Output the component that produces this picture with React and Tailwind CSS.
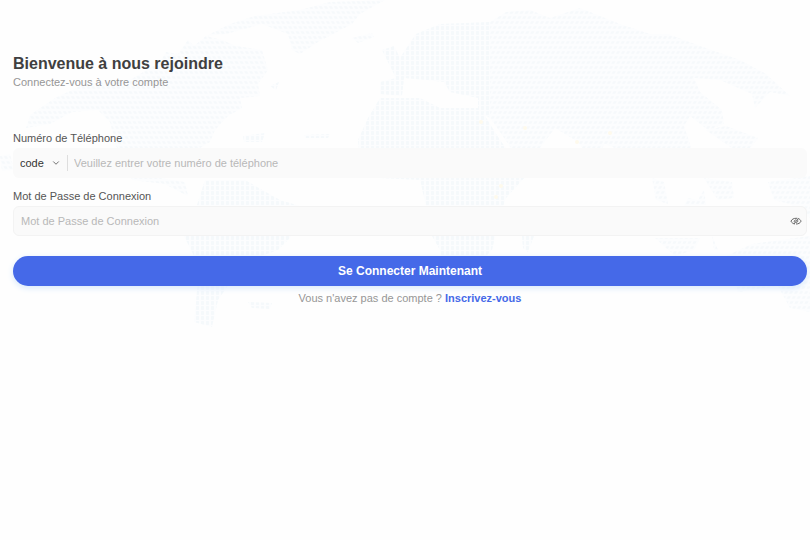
import { useState } from "react";
import { ChevronDown } from "lucide-react";

// Land masses of the globe, filled with a dotted pattern that leans with the curve
const WEST = [
  // North America
  "M26 128 L30 115 L55 98 L85 84 L130 80 L160 62 L166 52 L178 54 L188 40 L194 46 L206 36 L222 40 L236 46 L262 50 L268 70 L258 84 L260 96 L240 98 L242 108 L228 116 L215 130 L210 142 L190 154 L180 162 L165 158 L150 164 L160 178 L185 182 L188 196 L176 190 L165 184 L132 180 L125 160 L116 146 L110 122 L98 110 L72 112 L50 124 Z",
  // Greenland
  "M206 36 L230 24 L255 16 L300 10 L330 2 L385 0 L360 14 L352 24 L318 42 L300 54 L292 50 L288 34 L262 24 L226 34 Z",
  "M352 38 L372 33 L374 37 L358 43 Z",
  "M0 156 L10 154 L14 170 L2 171 Z",
];

const CENTER = [
  "M243 136 L265 133 L262 142 L244 142 Z M304 135 L330 134 L328 138 L305 138 Z M270 86 L279 82 L276 90 Z",
  // South America
  "M205 180 L245 180 L280 200 L300 206 L290 238 L278 250 L250 260 L232 280 L218 300 L212 327 L194 322 L198 280 L194 256 L184 236 L196 208 Z",
  "M248 302 L272 303 L270 309 L252 308 Z",
  // Western Europe
  "M382 50 L394 46 L400 58 L416 34 L440 24 L490 22 L490 118 L478 110 L478 98 L450 92 L444 82 L426 80 L404 78 L402 96 L380 94 L380 82 L396 78 Z",
  // Africa
  "M380 98 L420 98 L440 108 L480 108 L500 140 L526 176 L506 198 L500 216 L492 250 L470 272 L444 270 L440 250 L432 236 L426 206 L420 180 L380 178 L360 160 L358 140 L368 118 Z",
  "M522 236 L534 236 L528 252 L523 248 Z",
];

const EAST = [
  // Asia
  "M490 22 L506 12 L530 10 L550 18 L580 8 L620 24 L650 34 L668 34 L700 46 L740 60 L766 74 L790 96 L770 92 L755 108 L752 94 L720 80 L694 78 L700 92 L722 110 L724 124 L708 130 L690 116 L684 126 L692 150 L660 152 L620 150 L605 144 L592 162 L578 142 L555 128 L540 148 L515 154 L500 132 L490 118 Z",
  "M706 130 L726 126 L758 138 L750 148 L732 148 Z",
  // South-east Asia
  "M652 178 L664 182 L668 204 L656 200 Z M684 206 L688 198 L698 200 L704 190 L706 205 Z M704 178 L732 182 L734 198 L718 200 Z",
  "M768 182 L810 176 L810 218 L790 204 L774 200 Z M655 238 L700 238 L694 250 L675 256 Z M712 236 L718 250 L714 250 Z",
  // Australia
  "M726 256 L752 244 L810 236 L810 312 L790 308 L778 286 L738 292 Z",
];

const Land = ({ paths, fill }) =>
  paths.map((d) => (
    <g key={d}>
      <path d={d} fill="#fcfdfe" />
      <path d={d} fill={fill} />
    </g>
  ));

const WorldMap = () => (
  <svg
    aria-hidden="true"
    viewBox="0 0 810 330"
    className="absolute inset-x-0 top-0 w-full pointer-events-none"
  >
    <defs>
      <pattern id="dots" width="5" height="5" patternUnits="userSpaceOnUse">
        <rect x="1" y="1" width="3" height="4" rx="1" fill="#f5f9fb" />
      </pattern>
      <pattern id="dots-west" width="5" height="5" patternUnits="userSpaceOnUse" patternTransform="skewX(25)">
        <rect x="1" y="1" width="3" height="3" rx="1" fill="#f6f9fb" />
      </pattern>
      <pattern id="dots-east" width="5" height="5" patternUnits="userSpaceOnUse" patternTransform="skewX(-25)">
        <rect x="1" y="1" width="3" height="3" rx="1" fill="#f6f9fb" />
      </pattern>
    </defs>
    <Land paths={WEST} fill="url(#dots-west)" />
    <Land paths={CENTER} fill="url(#dots)" />
    <Land paths={EAST} fill="url(#dots-east)" />
    <g fill="#fefaec">
      <circle cx="481" cy="122" r="2" />
      <circle cx="525" cy="128" r="2" />
      <circle cx="577" cy="142" r="2" />
      <circle cx="610" cy="133" r="2" />
      <circle cx="501" cy="186" r="2" />
      <circle cx="496" cy="197" r="2" />
    </g>
  </svg>
);

const HiddenEye = () => (
  <svg
    viewBox="0 0 12 12"
    className="w-3 h-3"
    fill="none"
    stroke="currentColor"
    strokeWidth="1"
    strokeLinecap="round"
  >
    <path d="M4.6 8.9C3 8.6 1.6 7.7 1 6.2C1.8 4.2 3.8 3.3 6 3.3H7" />
    <path d="M8.8 3.8C9.9 4.3 10.7 5.1 11 6.2C10.2 8.100 8.4 9 6.4 9" />
    <path d="M4.2 6.8C4 5.6 4.800 4.900 6 4.900M7.800 5.700C8 6.800 7.200 7.500 6 7.500" />
    <path d="M8.4 3.6L4 8.8" />
  </svg>
);

const App = () => {
  const [showPassword, setShowPassword] = useState(false);

  return (
    <div className="relative min-h-screen bg-[#fefefe] font-['Liberation_Sans',Arial,sans-serif] text-[#404040]">
      <WorldMap />

      <main className="relative pl-[13px] pr-[3px] pt-[52px]">
        <h1 className="text-[16px] leading-6 font-bold">
          Bienvenue à nous rejoindre
        </h1>
        <p className="text-[11px] leading-3 text-[#969696]">
          Connectez-vous à votre compte
        </p>

        <form className="mt-10" onSubmit={(e) => e.preventDefault()}>
          {/* Phone */}
          <label htmlFor="phone" className="block text-[11px] leading-5 text-[#555]">
            Numéro de Téléphone
          </label>
          <div className="flex items-center h-[30px] rounded-md bg-[#fafafa]">
            <div className="relative flex items-center">
              <select
                aria-label="Code"
                className="appearance-none w-[54px] pl-[7px] bg-transparent text-[11px] leading-5 text-[#333] outline-none"
              >
                <option>code</option>
              </select>
              <ChevronDown className="absolute right-1.5 w-2.5 h-2.5 text-[#555] pointer-events-none" />
            </div>
            <span className="w-px h-4 bg-[#dedede]" />
            <input
              id="phone"
              type="tel"
              placeholder="Veuillez entrer votre numéro de téléphone"
              className="flex-1 min-w-0 px-1.5 bg-transparent text-[11px] leading-5 outline-none placeholder:text-[#b8b8b8]"
            />
          </div>

          {/* Password */}
          <label htmlFor="password" className="block mt-2 text-[11px] leading-5 text-[#555]">
            Mot de Passe de Connexion
          </label>
          <div className="flex items-center h-[30px] rounded-md border border-[#f3f3f3] bg-[#fafafa]">
            <input
              id="password"
              type={showPassword ? "text" : "password"}
              placeholder="Mot de Passe de Connexion"
              className="flex-1 min-w-0 px-[7px] bg-transparent text-[11px] leading-5 outline-none placeholder:text-[#b8b8b8]"
            />
            <button
              type="button"
              aria-label="Afficher le mot de passe"
              onClick={() => setShowPassword(!showPassword)}
              className="px-1 text-[#666]"
            >
              <HiddenEye />
            </button>
          </div>

          <button
            type="submit"
            className="block w-full h-[30px] mt-5 rounded-full bg-[#4569e8] text-[12px] leading-5 font-bold text-white shadow-[0_2px_6px_#d6e8fb]"
          >
            Se Connecter Maintenant
          </button>
        </form>

        <p className="mt-0.5 text-center text-[11px] leading-5 text-[#969696]">
          Vous n'avez pas de compte ?{" "}
          <a href="#inscription" className="font-bold text-[#4569e8]">
            Inscrivez-vous
          </a>
        </p>
      </main>
    </div>
  );
};

export default App;
